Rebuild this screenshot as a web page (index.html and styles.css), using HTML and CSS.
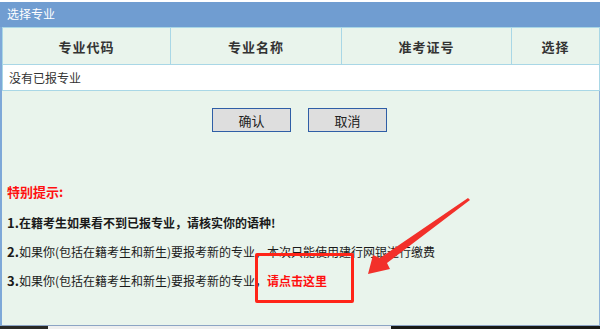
FILE: index.html
```html
<!DOCTYPE html>
<html lang="zh-CN">
<head>
<meta charset="utf-8">
<title>选择专业</title>
<link rel="stylesheet" href="styles.css">
</head>
<body>
<div class="panel">
  <div class="title">选择专业</div>
  <div class="content">
    <table class="grid">
      <colgroup>
        <col class="c1"><col class="c2"><col class="c3"><col class="c4">
      </colgroup>
      <thead>
        <tr><th>专业代码</th><th>专业名称</th><th>准考证号</th><th>选择</th></tr>
      </thead>
      <tbody>
        <tr><td colspan="4">没有已报专业</td></tr>
      </tbody>
    </table>
    <div class="actions">
      <button class="btn">确认</button>
      <button class="btn">取消</button>
    </div>
    <div class="notice">
      <p class="notice-title">特别提示:</p>
      <p class="bold"><b>1.</b>在籍考生如果看不到已报专业，请核实你的语种!</p>
      <p><b>2.</b>如果你(包括在籍考生和新生)要报考新的专业，本次只能使用建行网银进行缴费</p>
      <p><b>3.</b>如果你(包括在籍考生和新生)要报考新的专业，<a class="link">请点击这里</a></p>
    </div>
    <div class="mark-box"></div>
    <svg class="mark-arrow" width="600" height="329" viewBox="0 0 600 329">
      <polygon points="368,274 373,255 380,258 468,198 470,200 387,263 390,269" fill="#f2302a"/>
    </svg>
  </div>
</div>
<div class="strip">
  <div class="s1"></div><div class="s2"></div><div class="s3"></div>
</div>
</body>
</html>
```
FILE: styles.css
```css
html, body {
  margin: 0;
  padding: 0;
}
body {
  width: 600px;
  height: 329px;
  overflow: hidden;
  background: #ffffff;
  font-family: "Noto Sans CJK SC", "Microsoft YaHei", sans-serif;
  color: #1a1a1a;
}
.panel {
  margin-top: 2px;
  width: 600px;
}
.title {
  height: 25px;
  line-height: 24px;
  background: #709dd1;
  color: #ffffff;
  font-size: 12px;
  padding-left: 7px;
}
.content {
  position: relative;
  border-left: 2px solid #7ea8d8;
  border-right: 1px solid #8fb3da;
  border-bottom: 1px solid #8ca4c4;
  background: #e9f4ec;
  box-sizing: border-box;
  height: 299px;
}
.grid {
  width: 597px;
  border-collapse: collapse;
  table-layout: fixed;
  font-size: 12px;
}
.c1 { width: 168px; }
.c2 { width: 171px; }
.c3 { width: 170px; }
.c4 { width: 88px; }
.grid th, .grid td {
  border: 1px solid #a9d7e6;
  padding: 0;
}
.grid th {
  height: 36px;
  font-size: 13px;
  font-weight: bold;
  letter-spacing: 1px;
  color: #333333;
  text-align: center;
}
.grid td {
  height: 25px;
  background: #ffffff;
  padding-left: 6px;
  color: #333333;
}
.actions {
  display: flex;
  justify-content: center;
  gap: 17px;
  margin-top: 17px;
  padding-right: 2px;
}
.btn {
  width: 79px;
  height: 24px;
  background: #dedede;
  border: 1px solid #2f5ea6;
  font-family: inherit;
  font-size: 13px;
  color: #222222;
  padding: 0;
}
.notice {
  margin-top: 45px;
  padding-left: 5px;
  font-size: 12px;
}
.notice p {
  margin: 0;
  line-height: 29px;
  white-space: nowrap;
}
.notice .notice-title {
  color: #ff1010;
  font-weight: bold;
  font-size: 13px;
  margin-bottom: 2px;
}
.notice b {
  font-weight: bold;
  font-size: 13px;
}
.notice .bold {
  font-weight: bold;
}
.link {
  color: #ff1010;
  font-weight: bold;
}
.mark-box {
  position: absolute;
  left: 253px;
  top: 226px;
  width: 93px;
  height: 44px;
  border: 3px solid #ff2418;
  border-radius: 2px;
}
.mark-arrow {
  position: absolute;
  left: -2px;
  top: -27px;
  pointer-events: none;
}
.strip {
  display: flex;
  height: 3px;
}
.s1 { width: 48px; background: #2a2a26; }
.s2 { width: 343px; background: #efefef; }
.s3 { flex: 1; background: #1a1a16; }
```
